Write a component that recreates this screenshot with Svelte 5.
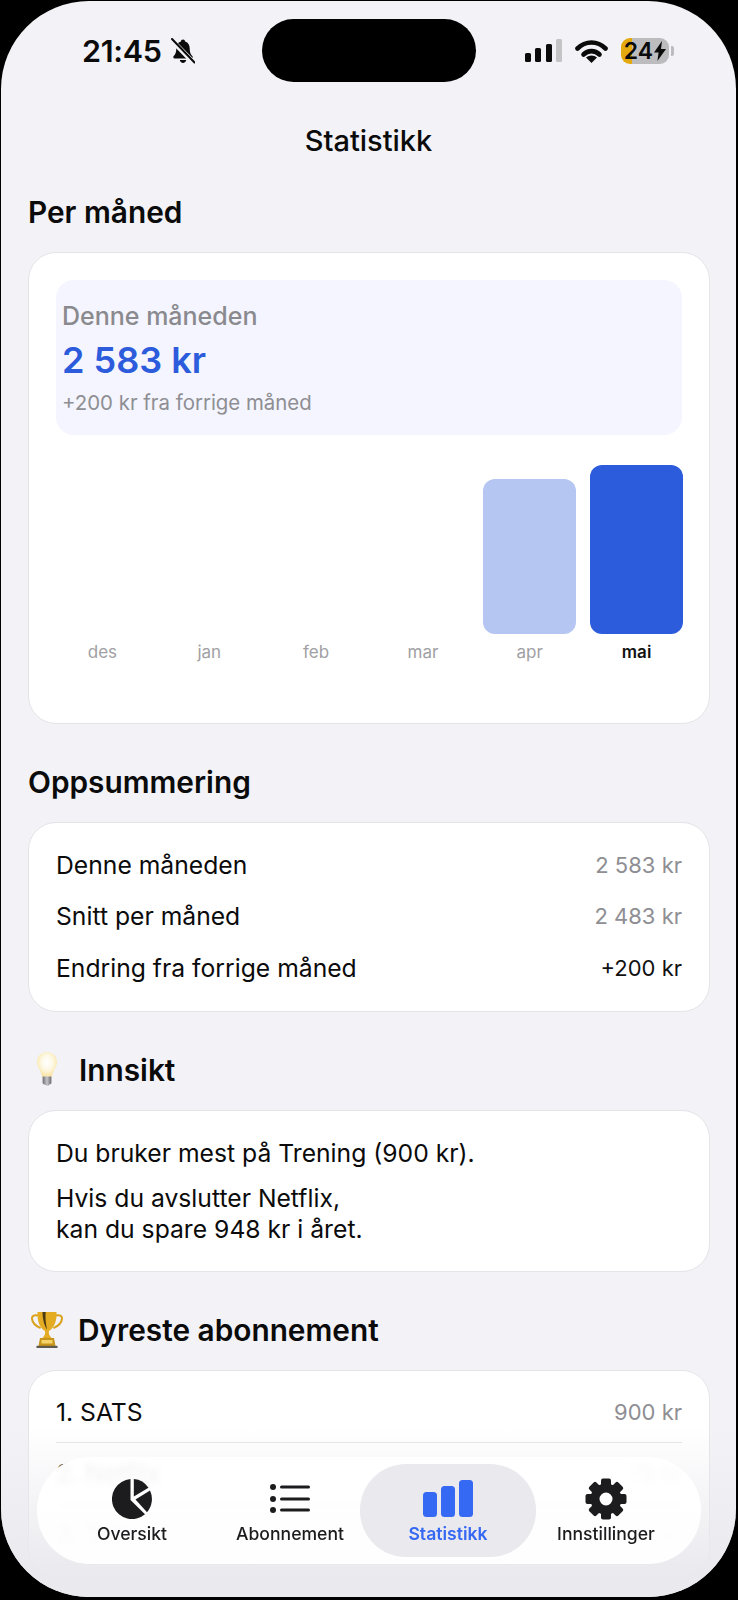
<script>
  const months = [
    { name: 'des', height: 0 },
    { name: 'jan', height: 0 },
    { name: 'feb', height: 0 },
    { name: 'mar', height: 0 },
    { name: 'apr', height: 155 },
    { name: 'mai', height: 169, current: true }
  ];

  const summary = [
    { label: 'Denne måneden', value: '2 583 kr' },
    { label: 'Snitt per måned', value: '2 483 kr' },
    { label: 'Endring fra forrige måned', value: '+200 kr', strong: true }
  ];

  const top = [
    { label: '1. SATS', value: '900 kr' },
    { label: '2. Netflix', value: '79 kr' },
    { label: '3. Telia', value: '599 kr' }
  ];

  const teeth = [0, 45, 90, 135, 180, 225, 270, 315];
</script>

<div class="phone">
  <div class="screen">
    <header class="status">
      <div class="status-left">
        <span class="time">21:45</span>
        <svg class="bell" viewBox="0 0 24 26" width="24" height="26">
          <path d="M12 1.5c-1.3 0-2 .9-2.1 1.9C6.6 4.4 5.3 7.3 5.3 10.5c0 3.6-.9 6-2.6 7.6-.9.9-.4 2.4 1 2.4h16.6c1.4 0 1.9-1.5 1-2.4-1.7-1.6-2.6-4-2.6-7.6 0-3.2-1.3-6.1-4.6-7.1C14 2.4 13.3 1.5 12 1.5zM8.8 22c.3 1.6 1.6 3 3.2 3s2.9-1.4 3.2-3z" fill="#0b0b0b" />
          <path d="M0 1.5 22 24" stroke="#f2f2f7" stroke-width="5" />
          <path d="M1 1 23.5 24.5" stroke="#0b0b0b" stroke-width="2" stroke-linecap="round" />
        </svg>
      </div>
      <div class="island"></div>
      <div class="status-right">
        <div class="signal">
          <i class="s1"></i><i class="s2"></i><i class="s3"></i><i class="s4"></i>
        </div>
        <svg class="wifi" viewBox="0 0 33 24" width="33" height="24">
          <path d="M2.5 9.5C10.5 1.5 22.5 1.5 30.5 9.5" fill="none" stroke="#0b0b0b" stroke-width="4.6" stroke-linecap="round" />
          <path d="M8.5 15.5C13 11 20 11 24.5 15.5" fill="none" stroke="#0b0b0b" stroke-width="4.6" stroke-linecap="round" />
          <path d="M16.5 24 11 18.6c3-2.8 8-2.8 11 0z" fill="#0b0b0b" />
        </svg>
        <div class="battery">
          <span>24</span>
          <svg viewBox="0 0 12 20" width="12" height="20">
            <path d="M8 0 0 11.5h4.6L3.4 20 12 8H7z" fill="#0b0b0b" />
          </svg>
        </div>
        <div class="battery-cap"></div>
      </div>
    </header>

    <h1>Statistikk</h1>

    <main>
      <h2>Per måned</h2>
      <section class="card chart-card">
        <div class="highlight">
          <div class="hl-label">Denne måneden</div>
          <div class="hl-amount">2 583 kr</div>
          <div class="hl-sub">+200 kr fra forrige måned</div>
        </div>
        <div class="chart">
          {#each months as m}
            <div class="col">
              <div class="bar-slot">
                {#if m.height}
                  <div class="bar" class:current={m.current} style="height: {m.height}px"></div>
                {/if}
              </div>
              <span class="month" class:current={m.current}>{m.name}</span>
            </div>
          {/each}
        </div>
      </section>

      <h2>Oppsummering</h2>
      <section class="card summary-card">
        {#each summary as row}
          <div class="row">
            <span>{row.label}</span>
            <span class="value" class:strong={row.strong}>{row.value}</span>
          </div>
        {/each}
      </section>

      <h2 class="with-icon">
        <svg class="emoji-bulb" viewBox="0 0 20 36" width="20" height="36">
          <defs>
            <radialGradient id="glass" cx="0.5" cy="0.42" r="0.6">
              <stop offset="0" stop-color="#ffffff" />
              <stop offset="0.5" stop-color="#fdf8e4" />
              <stop offset="1" stop-color="#f9e29b" />
            </radialGradient>
            <linearGradient id="screw" x1="0" x2="1" y1="0" y2="0">
              <stop offset="0" stop-color="#6f6f72" />
              <stop offset="0.5" stop-color="#c6c6c8" />
              <stop offset="1" stop-color="#69696c" />
            </linearGradient>
          </defs>
          <path d="M10 0C4.4 0 0 4.4 0 9.8c0 5.4 3.8 8.4 5.2 15h9.6c1.4-6.6 5.2-9.6 5.2-15C20 4.4 15.6 0 10 0z" fill="url(#glass)" />
          <path d="M5.6 24.5h8.8v6.2c0 1-1 1.6-2 1.8-.5 1.6-4.3 1.6-4.8 0-1-.2-2-.8-2-1.8z" fill="url(#screw)" />
        </svg>
        Innsikt
      </h2>
      <section class="card insight-card">
        <p>Du bruker mest på Trening (900 kr).</p>
        <p>Hvis du avslutter Netflix,<br />kan du spare 948 kr i året.</p>
      </section>

      <h2 class="with-icon">
        <svg class="emoji-trophy" viewBox="0 0 32 36" width="32" height="36">
          <path d="M7 3.5C3.6 2.5.8 3.6 1 6.6c.3 4.4 4.2 7.6 8.6 9.6" fill="none" stroke="#d9a11c" stroke-width="2" />
          <path d="M25 3.5c3.4-1 6.2.1 6 3.1-.3 4.4-4.2 7.6-8.6 9.6" fill="none" stroke="#d9a11c" stroke-width="2" />
          <path d="M6.5 0h19c.4 7.5-1.5 15.5-7.5 19-.8 2.5.6 5 2.6 7h-9.2c2-2 3.4-4.5 2.6-7C7.9 15.5 6.1 7.5 6.5 0z" fill="#e3ac22" />
          <path d="M11.5 0h3.2c-.6 6 .2 12 1.3 17.5C13.3 13.5 11.6 7 11.5 0z" fill="#4a3a14" />
          <path d="M9 26h14l1.5 8H7.5z" fill="#c8941a" />
          <rect x="10.5" y="28" width="11" height="3.5" fill="#f3d36a" />
          <rect x="5.5" y="33.8" width="21" height="2.2" fill="#5f5a50" />
        </svg>
        Dyreste abonnement
      </h2>
      <section class="card top-card">
        {#each top as row}
          <div class="row">
            <span>{row.label}</span>
            <span class="value">{row.value}</span>
          </div>
        {/each}
      </section>
    </main>

    <div class="fade"></div>

    <nav class="tabs">
      <div class="tab">
        <svg viewBox="0 0 40 40" width="40" height="40">
          <path d="M18.5.1A20 20 0 1 0 33 35.2L18.5 21z" fill="#1c1c1e" />
          <path d="M21.8.1A20 20 0 0 1 36.5 8.8L21.8 17.5z" fill="#1c1c1e" />
          <path d="M38 11.5A20 20 0 0 1 35 33.2L23.5 20.5z" fill="#1c1c1e" />
        </svg>
        <span>Oversikt</span>
      </div>
      <div class="tab">
        <svg viewBox="0 0 40 40" width="40" height="40" fill="#1c1c1e">
          <circle cx="3" cy="8" r="3" />
          <circle cx="3" cy="20" r="3" />
          <circle cx="3" cy="31" r="3" />
          <rect x="10" y="6.5" width="30" height="3" rx="1.5" />
          <rect x="10" y="18.5" width="30" height="3" rx="1.5" />
          <rect x="10" y="29.5" width="30" height="3" rx="1.5" />
        </svg>
        <span>Abonnement</span>
      </div>
      <div class="tab active">
        <svg viewBox="0 0 50 40" width="50" height="40" fill="#3568f3">
          <rect x="0" y="13" width="14" height="25" rx="3.5" />
          <rect x="18" y="7" width="14" height="31" rx="3.5" />
          <rect x="36" y="1" width="14" height="37" rx="3.5" />
        </svg>
        <span>Statistikk</span>
      </div>
      <div class="tab">
        <svg viewBox="0 0 42 42" width="42" height="42">
          <g fill="#1c1c1e">
            {#each teeth as deg}
              <rect x="16" y="0.5" width="10" height="10" rx="2" transform="rotate({deg} 21 21)" />
            {/each}
          </g>
          <circle cx="21" cy="21" r="11" fill="none" stroke="#1c1c1e" stroke-width="9" />
        </svg>
        <span>Innstillinger</span>
      </div>
    </nav>
  </div>
</div>

<style>
  :global(body) {
    margin: 0;
    background: #000;
  }

  .phone {
    width: 738px;
    height: 1600px;
    background: #000;
    padding: 1px 2px 3px 1px;
    box-sizing: border-box;
    font-family: Inter, "Noto Sans", sans-serif;
    color: #0b0b0b;
  }

  .screen {
    position: relative;
    height: 100%;
    background: #f2f2f7;
    border-radius: 88px;
    overflow: hidden;
  }

  .status {
    display: flex;
    align-items: center;
    justify-content: space-between;
    height: 63px;
    padding: 18px 62px 0 81px;
  }

  .status-left {
    display: flex;
    align-items: center;
    gap: 9px;
    width: 137px;
  }

  .time {
    font-size: 30.5px;
    font-weight: 600;
    letter-spacing: -0.3px;
  }

  .island {
    width: 214px;
    height: 63px;
    background: #000;
    border-radius: 32px;
    margin-right: 5px;
  }

  .status-right {
    display: flex;
    align-items: center;
  }

  .signal {
    display: flex;
    align-items: flex-end;
    gap: 4.5px;
    height: 23px;
  }

  .signal i {
    display: block;
    width: 6px;
    background: #0b0b0b;
    border-radius: 1.5px;
  }

  .s1 { height: 9px; }
  .s2 { height: 14px; }
  .s3 { height: 18px; }
  .signal .s4 { height: 23px; background: #c4c4c6; }

  .wifi {
    margin-left: 13px;
  }

  .battery {
    display: flex;
    align-items: center;
    justify-content: center;
    gap: 1px;
    width: 48px;
    height: 26px;
    margin-left: 13px;
    border-radius: 9px;
    background: linear-gradient(90deg, #e5a910 11px, #bcbcbf 11px);
    font-size: 23px;
    font-weight: 600;
  }

  .battery-cap {
    width: 3px;
    height: 10px;
    margin-left: 2px;
    background: #bcbcbf;
    border-radius: 0 2px 2px 0;
  }

  h1 {
    margin: 0;
    padding-top: 41px;
    text-align: center;
    font-size: 29px;
    line-height: 36px;
    font-weight: 500;
  }

  main {
    padding: 0 26px 0 27px;
  }

  h2 {
    margin: 40px 0 22px;
    font-size: 29.8px;
    line-height: 36px;
    font-weight: 600;
    height: 36px;
  }

  h2:first-child {
    margin-top: 35px;
  }

  .with-icon {
    display: flex;
    align-items: center;
    gap: 14px;
  }

  .emoji-bulb {
    margin: 0 8px 0 9px;
  }

  .emoji-trophy {
    margin-left: 3px;
    margin-right: 1px;
  }

  .card {
    background: #fff;
    border: 1px solid #e3e3e8;
    border-radius: 28px;
  }

  .chart-card {
    height: 472px;
    box-sizing: border-box;
    padding: 27px 27px 0;
  }

  .highlight {
    height: 155px;
    box-sizing: border-box;
    padding: 20px 6px 0;
    background: #f4f5fe;
    border-radius: 18px;
  }

  .hl-label {
    font-size: 25px;
    line-height: 32px;
    color: #8a8a8e;
    font-weight: 500;
  }

  .hl-amount {
    margin-top: 5px;
    font-size: 36px;
    line-height: 46px;
    font-weight: 600;
    color: #2c5cdc;
  }

  .hl-sub {
    margin-top: 6px;
    font-size: 20.4px;
    line-height: 28px;
    color: #8e8e93;
  }

  .chart {
    display: grid;
    grid-template-columns: repeat(6, 1fr);
    gap: 14px;
    margin-right: -1px;
  }

  .col {
    display: flex;
    flex-direction: column;
    align-items: stretch;
    text-align: center;
  }

  .bar-slot {
    display: flex;
    align-items: flex-end;
    height: 199px;
  }

  .bar {
    width: 100%;
    background: #b6c6f2;
    border-radius: 12px;
  }

  .bar.current {
    background: #2c5cdc;
  }

  .month {
    margin-top: 7px;
    font-size: 17px;
    line-height: 22px;
    color: #a0a0a4;
  }

  .month.current {
    color: #111;
    font-weight: 600;
  }

  .summary-card {
    padding: 16px 27px 17px;
  }

  .summary-card .row {
    height: 51.5px;
  }

  .row {
    display: flex;
    align-items: center;
    justify-content: space-between;
    font-size: 24.7px;
  }

  .value {
    font-size: 22px;
    color: #8e8e93;
  }

  .value.strong {
    color: #111;
  }

  .insight-card {
    padding: 27px 27px 26px;
    font-size: 24.7px;
    line-height: 31px;
  }

  .insight-card p {
    margin: 0;
  }

  .insight-card p + p {
    margin-top: 14px;
  }

  .top-card {
    padding: 11px 27px;
  }

  .top-card .row {
    height: 60px;
    border-bottom: 1px solid #e3e3e8;
  }

  .fade {
    position: absolute;
    left: 0;
    right: 0;
    bottom: 0;
    height: 170px;
    background: linear-gradient(rgba(233, 233, 238, 0), rgba(233, 233, 238, 0.95) 85%);
  }

  .tabs {
    position: absolute;
    left: 36px;
    width: 664px;
    top: 1456px;
    height: 107px;
    box-sizing: border-box;
    padding: 7px 0;
    display: grid;
    grid-template-columns: repeat(4, 158px);
    justify-content: center;
    border-radius: 53px;
    background: rgba(255, 255, 255, 0.93);
    backdrop-filter: blur(3px);
  }

  .tab {
    display: flex;
    flex-direction: column;
    align-items: center;
    padding-top: 14px;
    font-size: 17.6px;
    font-weight: 500;
    color: #1c1c1e;
  }

  .tab svg {
    display: block;
    height: 42px;
  }

  .tab span {
    margin-top: 3px;
    line-height: 22px;
  }

  .tab.active {
    margin: 0 -9px;
    background: #e9e9ee;
    border-radius: 46px;
    color: #3568f3;
    font-weight: 600;
  }
</style>
